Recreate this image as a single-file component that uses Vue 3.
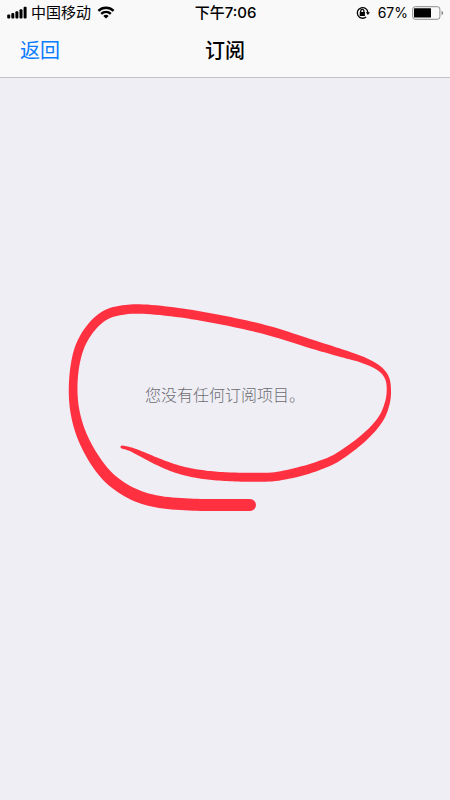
<script setup>
// Centre line of the pen mark: x, y and the pen's width at that point.
const pen = [
  [250, 505, 12], [222, 505, 12], [193, 504.7, 12], [160, 502, 12], [133.5, 494.3, 12], [110, 478.7, 11.5],
  [93.3, 457.7, 11], [80.5, 432, 10], [74, 405, 9], [73.7, 376, 8.6], [79, 349, 9], [90, 329, 9.2],
  [105, 315.4, 9.4], [123, 310, 9.4], [147, 309.3, 9.4], [187, 313.8, 9.2], [230, 321.6, 9.2], [270, 331, 9.2],
  [313, 344.5, 8.8], [345, 354.2, 7.6], [363, 360, 6.2], [378, 367.5, 5], [386.3, 376.5, 4.4],
  [388.8, 388, 4.2], [387.3, 403, 5], [380, 420, 6], [363, 438.5, 7.2], [338, 457, 8.2], [320, 465.2, 8.8],
  [300, 471.5, 9.2], [275, 476.6, 9], [250, 477.3, 9], [227, 476.7, 8.8], [208, 475.2, 8.7], [191, 472.6, 8.5],
  [175, 468.4, 8], [158, 461.8, 7.2], [140, 453.4, 5.4], [131, 449.4, 4], [122, 447, 3],
]

const STEPS = 8

function spline(a, b, c, d, t) {
  return 0.5 * (2 * b + (c - a) * t + (2 * a - 5 * b + 4 * c - d) * t * t + (3 * b - a - 3 * c + d) * t * t * t)
}

function outline(points) {
  const at = (i) => points[Math.min(Math.max(i, 0), points.length - 1)]
  const line = []
  for (let i = 0; i < points.length - 1; i++) {
    for (let s = 0; s < STEPS; s++) {
      line.push([0, 1, 2].map((k) => spline(at(i - 1)[k], at(i)[k], at(i + 1)[k], at(i + 2)[k], s / STEPS)))
    }
  }
  line.push(points[points.length - 1])

  const left = []
  const right = []
  line.forEach(([x, y, width], i) => {
    const from = line[Math.max(i - 1, 0)]
    const to = line[Math.min(i + 1, line.length - 1)]
    const dx = to[0] - from[0]
    const dy = to[1] - from[1]
    const k = width / 2 / Math.hypot(dx, dy)
    left.push([x - dy * k, y + dx * k])
    right.unshift([x + dy * k, y - dx * k])
  })
  const first = points[0][2] / 2
  const last = points[points.length - 1][2] / 2
  return `M${left.join('L')}A${last} ${last} 0 0 0 ${right.join('L')}A${first} ${first} 0 0 0 ${left[0]}Z`
}

const stroke = outline(pen)
</script>

<template>
  <div class="screen">
    <header class="top">
      <div class="status">
        <div class="side">
          <svg class="signal" width="20" height="13" viewBox="0 0 20 13" aria-hidden="true">
            <rect x="0.2" y="8.4" width="3" height="4.1" rx="1" />
            <rect x="4.3" y="7" width="3" height="5.5" rx="1" />
            <rect x="8.4" y="5.3" width="3" height="7.2" rx="1" />
            <rect x="12.5" y="3.2" width="3" height="9.3" rx="1" />
            <rect x="16.6" y="0.7" width="3" height="11.8" rx="1" />
          </svg>
          <span class="carrier">中国移动</span>
          <svg class="wifi" width="18" height="13" viewBox="0 0 18 13" aria-hidden="true">
            <path d="M1.4 4.8a10.9 10.9 0 0 1 15.2 0M4.2 7.9a6.8 6.8 0 0 1 9.6 0" />
            <path class="dot" d="M6.3 9.9a4 4 0 0 1 5.4 0L9 12.6Z" />
          </svg>
        </div>
        <span class="time">下午7:06</span>
        <div class="side end">
          <svg class="lock" width="14" height="14" viewBox="0 0 14 14" aria-hidden="true">
            <path class="line" d="M10.1 10.9a5.3 5.3 0 1 1 1.8-4.3" />
            <path d="M9.8 6.2h4.2L11.9 9ZM3.7 6.1h5.2v4H3.7Z" />
            <path class="shackle" d="M4.7 6.3V5a1.6 1.6 0 0 1 3.2 0v1.3" />
          </svg>
          <span class="percent">67%</span>
          <svg class="battery" width="32" height="14" viewBox="0 0 32 14" aria-hidden="true">
            <rect class="case" x="0.7" y="0.7" width="27.2" height="12.6" rx="2.5" />
            <rect x="2" y="2.2" width="17" height="9.4" rx="0.6" />
            <path class="cap" d="M29.5 4.7q1.8 1 1.8 2.3t-1.8 2.3Z" />
          </svg>
        </div>
      </div>
      <nav class="bar">
        <button class="back" type="button">返回</button>
        <h1 class="title">订阅</h1>
      </nav>
    </header>
    <main class="content">
      <div class="empty">
        <p class="message">您没有任何订阅项目。</p>
        <svg class="mark" width="340" height="240" viewBox="55 275 340 240" aria-hidden="true">
          <path :d="stroke" />
        </svg>
      </div>
    </main>
  </div>
</template>

<style>
body {
  margin: 0;
  background: #efeef5;
}
</style>

<style scoped>
.screen {
  display: flex;
  flex-direction: column;
  min-height: 100vh;
  font-family: Inter, "Noto Sans CJK SC", sans-serif;
  color: #000;
  background: #efeef5;
}

.top {
  background: #f9f9f9;
  border-bottom: 1px solid #c4c4c8;
}

.status {
  display: grid;
  grid-template-columns: 1fr auto 1fr;
  align-items: center;
  height: 25px;
  padding: 0 6px 0 7px;
  font-size: 14px;
  line-height: 25px;
}

.side {
  display: flex;
  align-items: center;
}

.end {
  justify-content: flex-end;
}

.carrier {
  margin: 0 6px 0 4px;
  font-size: 15px;
}

.wifi {
  fill: none;
  stroke: #000;
  stroke-width: 2.4;
}

.wifi .dot {
  fill: #000;
  stroke: none;
}

.time {
  font-size: 15px;
  font-weight: 500;
}

.lock {
  margin-right: 8px;
}

.lock .line,
.lock .shackle {
  fill: none;
  stroke: #000;
  stroke-width: 1.3;
}

.percent {
  margin-right: 4px;
}

.battery .case {
  fill: none;
  stroke: #8c8c8c;
}

.battery .cap {
  fill: #8c8c8c;
}

.bar {
  display: grid;
  grid-template-columns: 1fr auto 1fr;
  align-items: center;
  height: 52px;
  padding: 0 20px;
}

.back {
  justify-self: start;
  padding: 0;
  border: 0;
  background: none;
  color: #087cff;
  font: inherit;
  font-size: 20px;
  line-height: 28px;
}

.title {
  margin: 0;
  font-size: 20px;
  font-weight: 500;
  line-height: 28px;
}

.content {
  display: flex;
  justify-content: center;
  padding-top: 197px;
}

.empty {
  display: grid;
  place-items: center;
}

.message,
.mark {
  grid-area: 1 / 1;
}

.message {
  margin: 0;
  color: #6c6c71;
  font-size: 16px;
  font-weight: 300;
  line-height: 24px;
}

.mark {
  fill: #ff3141;
}
</style>
